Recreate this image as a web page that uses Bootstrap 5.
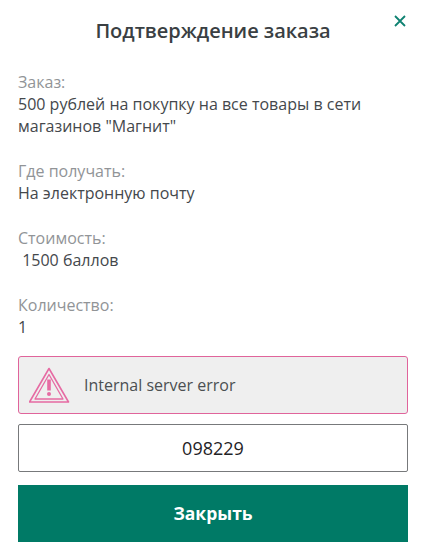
<!DOCTYPE html>
<html lang="ru">
<head>
<meta charset="utf-8">
<title>Подтверждение заказа</title>
<link href="https://cdn.jsdelivr.net/npm/bootstrap@5.3.0/dist/css/bootstrap.min.css" rel="stylesheet">
<style>
html, body { height: 100%; }
body { font-family: "Open Sans", "Liberation Sans", sans-serif; font-size: 16px; line-height: 22px; color: #44484c; background: #fff; overflow: hidden; }
.sheet { padding: 0 15px 0 18px; height: 552px; }
.top-bar { height: 71px; padding-top: 20px; }
.order-title { font-size: 20px; line-height: 22px; font-weight: 600; color: #3a3f43; margin: 0; letter-spacing: -0.03px; }
.close-x { top: 14px; right: 1px; width: 14px; height: 14px; padding: 0; border: 0; background: none; line-height: 0; }
.info-block { margin-bottom: 23px; }
.info-label { color: #919497; }
.err-box { height: 58px; background: #efefef; border: 1px solid #e0649b; border-radius: 3px; margin-top: -5px; padding-left: 10px; gap: 14px; color: #4b4f52; }
.code-field { height: 48px; margin-top: 10px; border: 1px solid #77797b; border-radius: 2px; font-size: 18px; color: #1f2326; text-align: center; background: #fff; }
.close-btn { height: 57px; margin-top: 13px; background: #007a66; color: #fff; font-size: 17.5px; font-weight: 700; border: 0; border-radius: 0; }
.close-btn:hover { background: #007a66; color: #fff; }
</style>
</head>
<body>
<div class="sheet">
  <div class="top-bar position-relative">
    <h1 class="order-title text-center">Подтверждение заказа</h1>
    <button type="button" class="close-x position-absolute" aria-label="Закрыть">
      <svg width="14" height="14" viewBox="0 0 14 14"><path d="M2 2 L12 12 M12 2 L2 12" stroke="#0f8272" stroke-width="1.8" fill="none"/></svg>
    </button>
  </div>
  <div class="info-block"><div class="info-label">Заказ:</div><div>500 рублей на покупку на все товары в сети магазинов "Магнит"</div></div>
  <div class="info-block"><div class="info-label">Где получать:</div><div>На электронную почту</div></div>
  <div class="info-block"><div class="info-label">Стоимость:</div><div>&nbsp;1500 баллов</div></div>
  <div class="info-block"><div class="info-label">Количество:</div><div>1</div></div>
  <div class="err-box d-flex align-items-center">
    <svg class="flex-shrink-0" width="41" height="37" viewBox="0 0 41 37" fill="none" stroke="#e66ba3">
      <path d="M20 1.5 L39.5 35 H0.5 Z" stroke-width="1.6" stroke-linejoin="round"/>
      <path d="M20 7.5 L34 32 H6 Z" stroke-width="1.3" stroke-linejoin="round"/>
      <path d="M20 12.5 V23.5" stroke-width="3.6"/>
      <circle cx="20" cy="27" r="2" fill="#e66ba3" stroke="none"/>
    </svg>
    <span>Internal server error</span>
  </div>
  <input class="form-control code-field" type="text" value="098229" aria-label="Код">
  <button type="button" class="btn close-btn w-100 d-block">Закрыть</button>
</div>
<script src="https://cdn.jsdelivr.net/npm/bootstrap@5.3.0/dist/js/bootstrap.bundle.min.js"></script>
</body>
</html>
